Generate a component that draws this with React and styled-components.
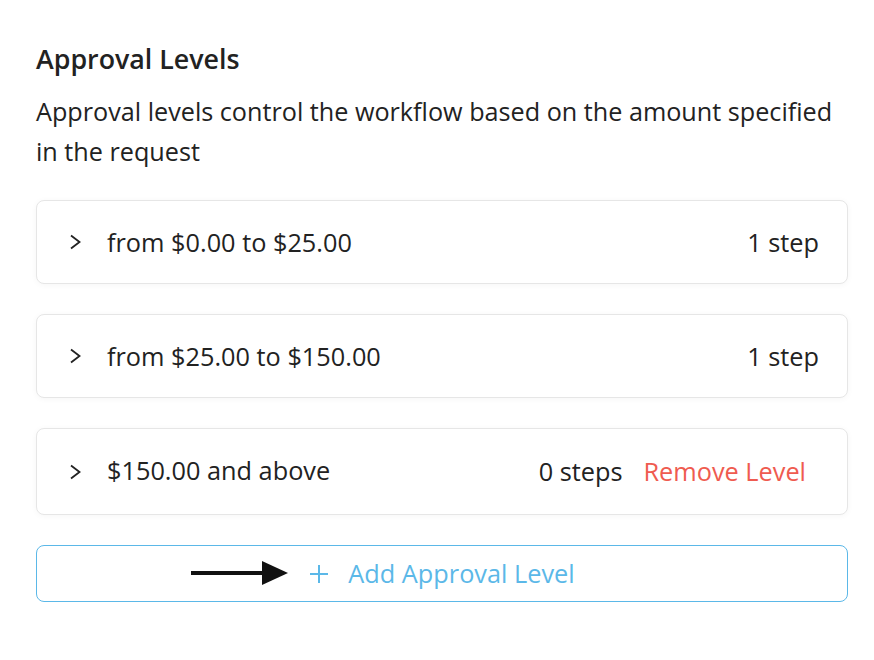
import React from "react";
import styled, { createGlobalStyle } from "styled-components";

const GlobalStyle = createGlobalStyle`
  body {
    margin: 0;
    background: #ffffff;
    font-family: "Open Sans", "Liberation Sans", sans-serif;
    color: #222222;
  }
`;

const Page = styled.div`
  padding: 39px 26px 0 36px;
`;

const Title = styled.h2`
  margin: 0;
  font-size: 26.8px;
  line-height: 40px;
  font-weight: 600;
  color: #222;
`;

const Description = styled.p`
  margin: 12px 0 0;
  font-size: 25.2px;
  line-height: 40px;
  font-weight: 400;
  color: #222;
`;

const LevelList = styled.div`
  margin-top: 29px;
  display: flex;
  flex-direction: column;
  gap: 30px;
`;

const LevelCard = styled.div`
  display: flex;
  align-items: center;
  height: ${(p) => (p.$tall ? 87 : 84)}px;
  box-sizing: border-box;
  padding: 0 28px 0 32px;
  border: 1px solid #e6e6e6;
  border-radius: 8px;
  background: #fff;
  box-shadow: 0 1px 6px rgba(0, 0, 0, 0.04);
  font-size: 25.3px;
`;

const Chevron = styled.span`
  display: flex;
  width: 38px;
  color: #222;
`;

const Range = styled.span`
  flex: 1;
  margin-top: ${(p) => (p.$raised ? -4 : 0)}px;
`;

const Steps = styled.span`
  color: #222;
  margin-top: ${(p) => (p.$raised ? -1 : 0)}px;
`;

const RemoveLink = styled.button`
  margin: -1px 13px 0 21px;
  border: none;
  background: none;
  padding: 0;
  font: inherit;
  color: #ef5b50;
  cursor: pointer;
`;

const AddButton = styled.button`
  position: relative;
  margin-top: 30px;
  width: 100%;
  height: 57px;
  display: flex;
  align-items: center;
  justify-content: center;
  gap: 19px;
  border: 1px solid #5bb8e8;
  border-radius: 8px;
  background: #fff;
  font-family: "Open Sans", "Liberation Sans", sans-serif;
  font-size: 25.3px;
  color: #5bb8e8;
  cursor: pointer;

  & > span {
    margin-top: -1px;
  }
`;

const Pointer = styled.svg`
  position: absolute;
  left: 154px;
  top: 14px;
`;

const ChevronIcon = () => (
  <svg width="12" height="16" viewBox="0 0 12 16">
    <path d="M2 1.5 L10.5 8 L2 14.5" fill="none" stroke="#222" strokeWidth="1.8" />
  </svg>
);

const PlusIcon = () => (
  <svg width="20" height="20" viewBox="0 0 20 20">
    <path d="M10 1 V19 M1 10 H19" stroke="#5bb8e8" strokeWidth="2" fill="none" />
  </svg>
);

const levels = [
  { range: "from $0.00 to $25.00", steps: "1 step" },
  { range: "from $25.00 to $150.00", steps: "1 step" },
  { range: "$150.00 and above", steps: "0 steps", removable: true },
];

export default function App() {
  return (
    <>
      <GlobalStyle />
      <Page>
        <Title>Approval Levels</Title>
        <Description>
          Approval levels control the workflow based on the amount specified in the request
        </Description>
        <LevelList>
          {levels.map((l) => (
            <LevelCard key={l.range} $tall={l.removable}>
              <Chevron>
                <ChevronIcon />
              </Chevron>
              <Range $raised={l.removable}>{l.range}</Range>
              <Steps $raised={l.removable}>{l.steps}</Steps>
              {l.removable && <RemoveLink>Remove Level</RemoveLink>}
            </LevelCard>
          ))}
        </LevelList>
        <AddButton>
          <Pointer width="98" height="26" viewBox="0 0 98 26">
            <path d="M0 13 H74" stroke="#111" strokeWidth="4" />
            <path d="M71 1 L97 13 L71 25 Z" fill="#111" />
          </Pointer>
          <PlusIcon />
          <span>Add Approval Level</span>
        </AddButton>
      </Page>
    </>
  );
}
